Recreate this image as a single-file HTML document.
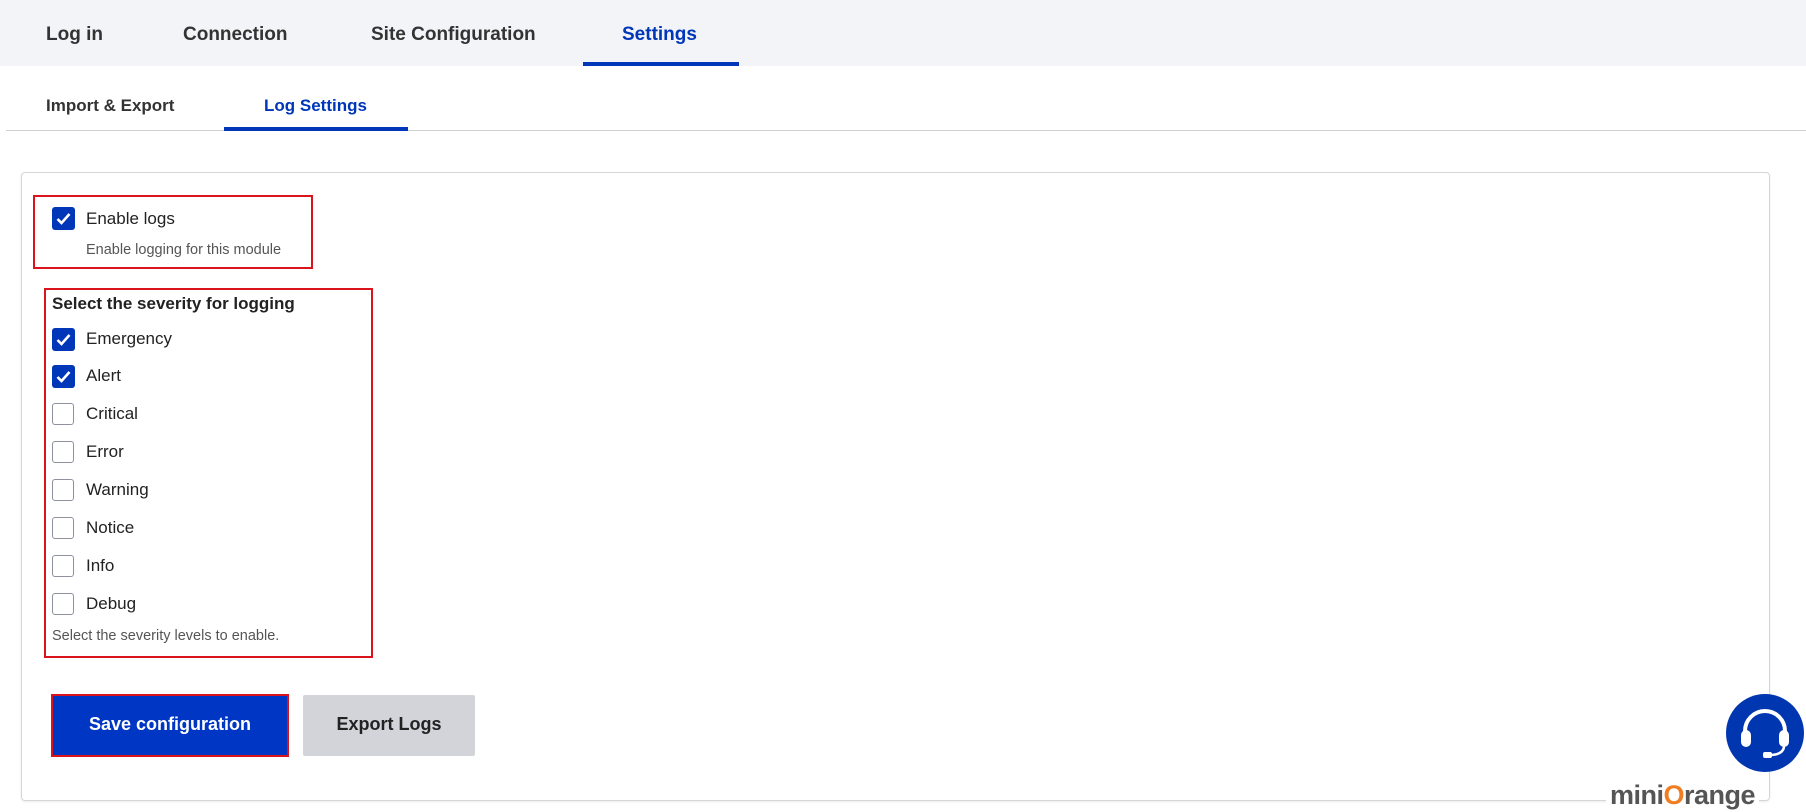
<!DOCTYPE html>
<html><head><meta charset="utf-8"><style>
*{margin:0;padding:0;box-sizing:border-box}
body{width:1806px;height:812px;background:#fff;font-family:"Liberation Sans",Arial,sans-serif;color:#222;position:relative;overflow:hidden}
.abs{position:absolute}
.top{left:0;top:0;width:1806px;height:66px;background:#f3f4f8}
.tab{top:24px;font-size:19px;font-weight:bold;color:#333;white-space:nowrap}
.sub{top:96px;font-size:17px;font-weight:bold;color:#333;white-space:nowrap}
.blue{color:#0036b8}
.cb{width:22px;height:22px;border:1.5px solid #8e929c;border-radius:3px;background:#fff}
.cb.on{background:#0036b8;border-color:#0036b8}
.lbl{font-size:17px;color:#222;white-space:nowrap}
.desc{font-size:14.5px;color:#555;white-space:nowrap}
</style></head><body>
<div class="abs top"></div>
<div class="abs tab" style="left:46px">Log in</div>
<div class="abs tab" style="left:183px">Connection</div>
<div class="abs tab" style="left:371px">Site Configuration</div>
<div class="abs tab blue" style="left:622px">Settings</div>
<div class="abs" style="left:583px;top:62px;width:156px;height:4px;background:#0036b8"></div>

<div class="abs sub" style="left:46px">Import &amp; Export</div>
<div class="abs sub blue" style="left:264px">Log Settings</div>
<div class="abs" style="left:6px;top:130px;width:1800px;height:1px;background:#d0d0d0"></div>
<div class="abs" style="left:224px;top:127px;width:184px;height:4px;background:#0036b8"></div>

<div class="abs" style="left:21px;top:172px;width:1749px;height:629px;border:1px solid #d6d6d6;border-radius:4px;box-shadow:0 1px 2px rgba(0,0,0,.08)"></div>

<div class="abs" style="left:33px;top:195px;width:280px;height:74px;border:2px solid #d9141c"></div>
<svg class="abs" style="left:52px;top:207px" width="23" height="23"><rect width="23" height="23" rx="3" fill="#0036b8"/><path d="M5.5 12l4 4 8-9" stroke="#fff" stroke-width="2.6" fill="none"/></svg>
<div class="abs lbl" style="left:86px;top:209px">Enable logs</div>
<div class="abs desc" style="left:86px;top:242px">Enable logging for this module</div>

<div class="abs" style="left:44px;top:288px;width:329px;height:370px;border:2px solid #d9141c"></div>
<div class="abs lbl" style="left:52px;top:294px;font-weight:bold">Select the severity for logging</div>

<svg class="abs" style="left:52px;top:328px" width="23" height="23"><rect width="23" height="23" rx="3" fill="#0036b8"/><path d="M5.5 12l4 4 8-9" stroke="#fff" stroke-width="2.6" fill="none"/></svg>
<div class="abs lbl" style="left:86px;top:329px">Emergency</div>
<svg class="abs" style="left:52px;top:365px" width="23" height="23"><rect width="23" height="23" rx="3" fill="#0036b8"/><path d="M5.5 12l4 4 8-9" stroke="#fff" stroke-width="2.6" fill="none"/></svg>
<div class="abs lbl" style="left:86px;top:366px">Alert</div>
<div class="abs cb" style="left:52px;top:403px"></div><div class="abs lbl" style="left:86px;top:404px">Critical</div>
<div class="abs cb" style="left:52px;top:441px"></div><div class="abs lbl" style="left:86px;top:442px">Error</div>
<div class="abs cb" style="left:52px;top:479px"></div><div class="abs lbl" style="left:86px;top:480px">Warning</div>
<div class="abs cb" style="left:52px;top:517px"></div><div class="abs lbl" style="left:86px;top:518px">Notice</div>
<div class="abs cb" style="left:52px;top:555px"></div><div class="abs lbl" style="left:86px;top:556px">Info</div>
<div class="abs cb" style="left:52px;top:593px"></div><div class="abs lbl" style="left:86px;top:594px">Debug</div>
<div class="abs desc" style="left:52px;top:628px">Select the severity levels to enable.</div>

<div class="abs" style="left:51px;top:694px;width:238px;height:63px;border:2px solid #d9141c;background:#0036c4;padding:2px"></div>
<div class="abs" style="left:51px;top:714px;width:238px;text-align:center;font-size:18px;font-weight:bold;color:#fff">Save configuration</div>
<div class="abs" style="left:303px;top:695px;width:172px;height:61px;background:#d3d4d9;border-radius:2px"></div>
<div class="abs" style="left:303px;top:714px;width:172px;text-align:center;font-size:18px;font-weight:bold;color:#222">Export Logs</div>

<svg class="abs" style="left:1724px;top:693px" width="82" height="82"><circle cx="41" cy="40" r="39" fill="#0036b0"/>
<path d="M21 46v-8a20 20 0 0 1 40 0v8" stroke="#fff" stroke-width="4" fill="none"/>
<rect x="17" y="37" width="10" height="17" rx="5" fill="#fff"/><rect x="55" y="37" width="10" height="17" rx="5" fill="#fff"/>
<path d="M60 53c0 6-6 9-14 9" stroke="#fff" stroke-width="2.5" fill="none"/><rect x="39" y="59" width="9" height="6" rx="2" fill="#fff"/></svg>
<div class="abs" style="left:1606px;top:780px;font-size:27px;font-weight:bold;color:#555;letter-spacing:-.5px;background:#fff;padding:0 4px">mini<span style="color:#f07d22">O</span>range</div>
</body></html>
